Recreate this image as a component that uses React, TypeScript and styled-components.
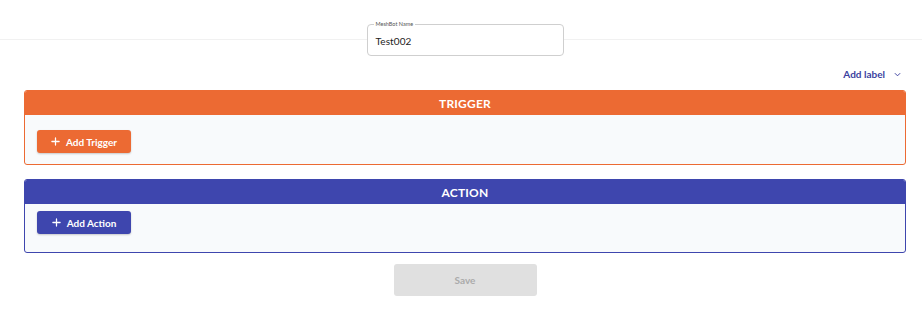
import React from "react";
import styled, { createGlobalStyle } from "styled-components";

const Global = createGlobalStyle`
  html, body { margin: 0; padding: 0; background: #ffffff; }
  body { font-family: Lato, "Noto Sans", sans-serif; color: #222; }
  * { box-sizing: border-box; }
`;

const Page = styled.div`
  width: 922px;
  min-height: 328px;
  padding: 24px 16px 0 24px;
  background: linear-gradient(#f1f1f1, #f1f1f1) no-repeat 0 39px / 100% 1px;
  display: flex;
  flex-direction: column;
`;

const NameRow = styled.div`
  display: flex;
  justify-content: center;
`;

const Field = styled.fieldset`
  position: relative;
  margin: 0;
  width: 197px;
  height: 32px;
  padding: 0 8px;
  border: 1px solid #cfcfcf;
  border-radius: 4px;
  background: #fff;
  display: flex;
  align-items: center;
`;

const Legend = styled.span`
  position: absolute;
  top: -5px;
  left: 6px;
  padding: 0 2px;
  background: #fff;
  font-size: 5.5px;
  line-height: 8px;
  color: #555;
`;

const FieldValue = styled.span`
  font-size: 10px;
  color: #222;
  padding-top: 1px;
  letter-spacing: 0.1px;
`;

const LabelRow = styled.div`
  display: flex;
  justify-content: flex-end;
  align-items: center;
  gap: 9px;
  margin-top: 11px;
  height: 14px;
  padding-right: 5px;
  color: #3b3f9f;
`;

const LabelText = styled.span`
  font-size: 10px;
  font-weight: 700;
`;

const Panel = styled.section<{ $c: string; $mt: number; $pt: number; $pb: number }>`
  margin-top: ${(p) => p.$mt}px;
  border: 1px solid ${(p) => (p.$c === "orange" ? "#ec6a33" : "#3e46ae")};
  border-radius: 3px;
  background: #f8fafc;
  overflow: hidden;
  .body { padding: ${(p) => p.$pt}px 12px ${(p) => p.$pb}px; }
`;

const PanelHead = styled.div<{ $c: string }>`
  height: 24px;
  background: ${(p) => (p.$c === "orange" ? "#ec6a33" : "#3e46ae")};
  color: #fff;
  font-size: 12px;
  font-weight: 700;
  display: flex;
  align-items: center;
  justify-content: center;
  letter-spacing: 0.2px;
`;

const AddButton = styled.button<{ $c: string }>`
  width: 94px;
  height: 23px;
  border: none;
  border-radius: 3px;
  background: ${(p) => (p.$c === "orange" ? "#ec6a33" : "#3e46ae")};
  color: #fff;
  font-family: inherit;
  font-size: 10px;
  font-weight: 700;
  display: flex;
  align-items: center;
  justify-content: center;
  gap: 6px;
  box-shadow: 0 1px 2px rgba(0, 0, 0, 0.2);
  padding: 0;
`;

const SaveRow = styled.div`
  display: flex;
  justify-content: center;
  margin-top: 11px;
`;

const SaveButton = styled.button`
  width: 143px;
  height: 32px;
  border: none;
  border-radius: 3px;
  background: #e0e0e0;
  color: #ababab;
  font-family: inherit;
  font-size: 10px;
  font-weight: 700;
`;

const Plus = () => (
  <svg width="9" height="9" viewBox="0 0 10 10">
    <path d="M5 1v8M1 5h8" stroke="#fff" strokeWidth="1.4" strokeLinecap="round" />
  </svg>
);

const Chevron = () => (
  <svg width="7" height="5" viewBox="0 0 8 5">
    <path d="M1 1l3 3 3-3" fill="none" stroke="#3b3f9f" strokeWidth="1.1" />
  </svg>
);

export default function App() {
  return (
    <>
      <Global />
      <Page>
        <NameRow>
          <Field>
            <Legend>MeshBot Name</Legend>
            <FieldValue>Test002</FieldValue>
          </Field>
        </NameRow>
        <LabelRow>
          <LabelText>Add label</LabelText>
          <Chevron />
        </LabelRow>
        <Panel $c="orange" $mt={9} $pt={15} $pb={11}>
          <PanelHead $c="orange">TRIGGER</PanelHead>
          <div className="body">
            <AddButton $c="orange">
              <Plus />
              Add Trigger
            </AddButton>
          </div>
        </Panel>
        <Panel $c="indigo" $mt={14} $pt={7} $pb={18}>
          <PanelHead $c="indigo">ACTION</PanelHead>
          <div className="body">
            <AddButton $c="indigo">
              <Plus />
              Add Action
            </AddButton>
          </div>
        </Panel>
        <SaveRow>
          <SaveButton disabled>Save</SaveButton>
        </SaveRow>
      </Page>
    </>
  );
}
